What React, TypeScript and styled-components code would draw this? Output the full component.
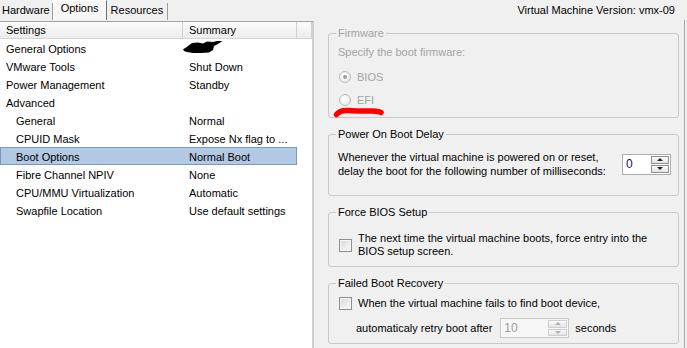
import React from "react";
import styled, { createGlobalStyle, css } from "styled-components";

const GlobalStyle = createGlobalStyle`
  html, body { margin: 0; padding: 0; background: #f0f0f0; }
  body {
    font-family: "Liberation Sans", Arial, sans-serif;
    font-size: 11px;
    color: #000;
  }
`;

const Window = styled.div`
  width: 687px;
  height: 348px;
  overflow: hidden;
  display: flex;
  flex-direction: column;
  background: #f0f0f0;
`;

const TopBar = styled.div`
  height: 20px;
  display: flex;
  justify-content: space-between;
  align-items: flex-end;
  flex-shrink: 0;
`;

const TabStrip = styled.div`
  display: flex;
  align-items: flex-end;
  height: 20px;
`;

const Tab = styled.div<{ $active?: boolean; $pad: number }>`
  box-sizing: border-box;
  height: 17px;
  line-height: 15px;
  padding: 0 ${(p) => p.$pad}px;
  border-right: 1px solid #9a9a9a;
  white-space: nowrap;
  ${(p) =>
    p.$active &&
    css`
      height: 20px;
      line-height: 15px;
      background: #f7f7f7;
      border-left: 1px solid #ffffff;
      border-top: 1px solid #ffffff;
      border-right: 1px solid #6e6e6e;
    `}
`;

const VersionLabel = styled.div`
  line-height: 20px;
  padding-right: 12px;
  white-space: nowrap;
`;

const Body = styled.div`
  flex: 1;
  display: flex;
  min-height: 0;
`;

const ListPanel = styled.div`
  box-sizing: border-box;
  width: 314px;
  margin-top: 1px;
  background: #fff;
  border-top: 1px solid #a0a0a0;
  border-right: 2px solid #cfcfcf;
  flex-shrink: 0;
`;

const HeaderRow = styled.div`
  display: flex;
  height: 16px;
  border-bottom: 1px solid #d5d5d5;
  background: linear-gradient(#fbfbfb, #ececec);
`;

const HeaderCell = styled.div<{ $w?: number }>`
  box-sizing: border-box;
  ${(p) => (p.$w ? `width: ${p.$w}px;` : "flex: 1;")}
  padding-left: 6px;
  line-height: 16px;
  border-right: 1px solid #d0d0d0;
  white-space: nowrap;
`;

const Row = styled.div<{ $selected?: boolean }>`
  box-sizing: border-box;
  display: grid;
  grid-template-columns: 183px 114px;
  width: 297px;
  height: 18px;
  line-height: 18px;
  border: 1px solid transparent;
  ${(p) =>
    p.$selected &&
    css`
      background: #b3c8e2;
      border-color: #7898c4;
    `}
`;

const NameCell = styled.div<{ $indent: number }>`
  padding-left: ${(p) => p.$indent - 1}px;
  white-space: nowrap;
  overflow: hidden;
`;

const SummaryCell = styled.div`
  padding-left: 5px;
  white-space: nowrap;
  display: flex;
  align-items: center;
`;

const InkBlot = styled.svg`
  margin-left: -6px;
  margin-top: -3px;
  flex-shrink: 0;
`;

const DetailPanel = styled.div`
  flex: 1;
  box-sizing: border-box;
  padding: 6px 5px 0 14px;
  border-right: 1px solid #a7a7a7;
  margin-right: 2px;
`;

const GroupBox = styled.fieldset<{ $pr?: number }>`
  margin: 0 0 9px 0;
  padding: 0 ${(p) => p.$pr ?? 9}px 0 9px;
  border: 1px solid #c9c9c9;
  border-radius: 3px;
  min-width: 0;
`;

const GroupTitle = styled.legend<{ $disabled?: boolean }>`
  padding: 0 2px;
  margin-left: -2px;
  line-height: 14px;
  color: ${(p) => (p.$disabled ? "#a3a3a3" : "#000")};
`;

const GroupBody = styled.div<{ $pt: number; $pb: number }>`
  padding-top: ${(p) => p.$pt}px;
  padding-bottom: ${(p) => p.$pb}px;
  display: flex;
  flex-direction: column;
`;

const DisabledText = styled.div<{ $mb?: number }>`
  color: #a3a3a3;
  line-height: 14px;
  height: 14px;
  margin-bottom: ${(p) => p.$mb ?? 0}px;
`;

const RadioRow = styled.div<{ $mb?: number }>`
  position: relative;
  display: flex;
  align-items: center;
  height: 14px;
  line-height: 14px;
  gap: 6px;
  padding-left: 1px;
  color: #a3a3a3;
  margin-bottom: ${(p) => p.$mb ?? 0}px;
`;

const RadioCircle = styled.span<{ $checked?: boolean }>`
  box-sizing: border-box;
  width: 12px;
  height: 12px;
  border-radius: 50%;
  border: 1px solid #b8b8b8;
  background: radial-gradient(circle at 40% 40%, #ffffff, #e6e6e6);
  display: flex;
  align-items: center;
  justify-content: center;
  &::after {
    content: "";
    width: 4px;
    height: 4px;
    border-radius: 50%;
    background: ${(p) => (p.$checked ? "#9c9c9c" : "transparent")};
  }
`;

const RedMark = styled.svg`
  position: absolute;
  left: -5px;
  top: 12px;
`;

const DelayRow = styled.div`
  display: flex;
  align-items: center;
  justify-content: space-between;
  height: 28px;
`;

const Para = styled.div<{ $lh?: number }>`
  line-height: ${(p) => p.$lh ?? 14}px;
  white-space: nowrap;
`;

const SpinBox = styled.div<{ $w: number; $h: number; $disabled?: boolean }>`
  box-sizing: border-box;
  width: ${(p) => p.$w}px;
  height: ${(p) => p.$h}px;
  border: 1px solid ${(p) => (p.$disabled ? "#c9c9c9" : "#abadb3")};
  background: ${(p) => (p.$disabled ? "#f7f7f7" : "#fff")};
  display: flex;
  align-items: stretch;
  flex-shrink: 0;
`;

const SpinValue = styled.div<{ $disabled?: boolean }>`
  flex: 1;
  padding-left: 3px;
  display: flex;
  align-items: center;
  font-size: 12px;
  color: ${(p) => (p.$disabled ? "#9a9a9a" : "#1a1060")};
`;

const SpinButtons = styled.div<{ $w: number }>`
  width: ${(p) => p.$w}px;
  display: flex;
  flex-direction: column;
  padding: 1px;
  gap: 1px;
`;

const SpinButton = styled.div<{ $disabled?: boolean }>`
  flex: 1;
  box-sizing: border-box;
  border: 1px solid ${(p) => (p.$disabled ? "#cfcfcf" : "#8e8f8f")};
  background: linear-gradient(#fafafa, #e4e4e4);
  display: flex;
  align-items: center;
  justify-content: center;
`;

const Arrow = styled.span<{ $down?: boolean; $disabled?: boolean }>`
  width: 0;
  height: 0;
  border-left: 3px solid transparent;
  border-right: 3px solid transparent;
  ${(p) =>
    p.$down
      ? `border-top: 3px solid ${p.$disabled ? "#b0b0b0" : "#202020"};`
      : `border-bottom: 3px solid ${p.$disabled ? "#b0b0b0" : "#202020"};`}
`;

const CheckRow = styled.div<{ $gap: number }>`
  display: flex;
  align-items: center;
  gap: ${(p) => p.$gap}px;
  padding-left: 1px;
`;

const CheckBox = styled.span`
  box-sizing: border-box;
  width: 13px;
  height: 13px;
  border: 1px solid #8e8f8f;
  background: linear-gradient(135deg, #dadada, #fbfbfb);
  box-shadow: inset 0 0 0 1px #f4f4f4;
  flex-shrink: 0;
`;

const RetryRow = styled.div`
  display: flex;
  align-items: center;
  height: 20px;
  margin-top: 8px;
  padding-left: 18px;
  white-space: nowrap;
`;

const RetryLabel = styled.span<{ $ml?: number; $mr?: number }>`
  margin-left: ${(p) => p.$ml ?? 0}px;
  margin-right: ${(p) => p.$mr ?? 0}px;
`;

type Item = { name: string; summary?: string; indent: number; blot?: boolean; selected?: boolean };

const items: Item[] = [
  { name: "General Options", indent: 6, blot: true },
  { name: "VMware Tools", summary: "Shut Down", indent: 6 },
  { name: "Power Management", summary: "Standby", indent: 6 },
  { name: "Advanced", summary: "", indent: 6 },
  { name: "General", summary: "Normal", indent: 16 },
  { name: "CPUID Mask", summary: "Expose Nx flag to ...", indent: 16 },
  { name: "Boot Options", summary: "Normal Boot", indent: 16, selected: true },
  { name: "Fibre Channel NPIV", summary: "None", indent: 16 },
  { name: "CPU/MMU Virtualization", summary: "Automatic", indent: 16 },
  { name: "Swapfile Location", summary: "Use default settings", indent: 16 },
];

function Spinner({ w, h, bw, value, disabled }: { w: number; h: number; bw: number; value: string; disabled?: boolean }) {
  return (
    <SpinBox $w={w} $h={h} $disabled={disabled}>
      <SpinValue $disabled={disabled}>{value}</SpinValue>
      <SpinButtons $w={bw}>
        <SpinButton $disabled={disabled}>
          <Arrow $disabled={disabled} />
        </SpinButton>
        <SpinButton $disabled={disabled}>
          <Arrow $down $disabled={disabled} />
        </SpinButton>
      </SpinButtons>
    </SpinBox>
  );
}

export default function App() {
  return (
    <>
      <GlobalStyle />
      <Window>
        <TopBar>
          <TabStrip>
            <Tab $pad={2}>Hardware</Tab>
            <Tab $pad={7} $active>
              Options
            </Tab>
            <Tab $pad={4}>Resources</Tab>
          </TabStrip>
          <VersionLabel>Virtual Machine Version: vmx-09</VersionLabel>
        </TopBar>
        <Body>
          <ListPanel>
            <HeaderRow>
              <HeaderCell $w={183}>Settings</HeaderCell>
              <HeaderCell $w={114}>Summary</HeaderCell>
              <HeaderCell />
            </HeaderRow>
            {items.map((it) => (
              <Row key={it.name} $selected={it.selected}>
                <NameCell $indent={it.indent}>{it.name}</NameCell>
                <SummaryCell>
                  {it.blot ? (
                    <InkBlot width="40" height="12" viewBox="0 0 40 12">
                      <path
                        d="M0 8.5 L5 5 L9 2 L15 1.5 L20 2.5 L24 0.5 L30 1 L34 0 L39.5 0 L35 3 L31 5 L30 9 L26 11.5 L18 12 L10 12 L4 11 L1 10 Z"
                        fill="#000"
                      />
                    </InkBlot>
                  ) : (
                    it.summary
                  )}
                </SummaryCell>
              </Row>
            ))}
          </ListPanel>
          <DetailPanel>
            <GroupBox>
              <GroupTitle $disabled>Firmware</GroupTitle>
              <GroupBody $pt={5} $pb={10}>
                <DisabledText $mb={11}>Specify the boot firmware:</DisabledText>
                <RadioRow $mb={9}>
                  <RadioCircle $checked />
                  BIOS
                </RadioRow>
                <RadioRow>
                  <RadioCircle />
                  EFI
                  <RedMark width="52" height="14" viewBox="0 0 52 14">
                    <path
                      d="M3.5 9.5 C6 6, 10 5, 16 5.5 C24 6.3, 34 5.7, 40 6 C44 6.3, 46.5 6.5, 48 7.5"
                      stroke="#ff0000"
                      strokeWidth="5.5"
                      strokeLinecap="round"
                      fill="none"
                    />
                  </RedMark>
                </RadioRow>
              </GroupBody>
            </GroupBox>

            <GroupBox $pr={7}>
              <GroupTitle>Power On Boot Delay</GroupTitle>
              <GroupBody $pt={9} $pb={17}>
                <DelayRow>
                  <Para>
                    Whenever the virtual machine is powered on or reset,
                    <br />
                    delay the boot for the following number of milliseconds:
                  </Para>
                  <Spinner w={49} h={21} bw={18} value="0" />
                </DelayRow>
              </GroupBody>
            </GroupBox>

            <GroupBox>
              <GroupTitle>Force BIOS Setup</GroupTitle>
              <GroupBody $pt={13} $pb={8}>
                <CheckRow $gap={6}>
                  <CheckBox />
                  <Para $lh={13}>
                    The next time the virtual machine boots, force entry into the
                    <br />
                    BIOS setup screen.
                  </Para>
                </CheckRow>
              </GroupBody>
            </GroupBox>

            <GroupBox>
              <GroupTitle>Failed Boot Recovery</GroupTitle>
              <GroupBody $pt={6} $pb={5}>
                <CheckRow $gap={6}>
                  <CheckBox />
                  <Para>When the virtual machine fails to find boot device,</Para>
                </CheckRow>
                <RetryRow>
                  <RetryLabel $mr={8}>automaticaly retry boot after</RetryLabel>
                  <Spinner w={69} h={20} bw={19} value="10" disabled />
                  <RetryLabel $ml={6}>seconds</RetryLabel>
                </RetryRow>
              </GroupBody>
            </GroupBox>
          </DetailPanel>
        </Body>
      </Window>
    </>
  );
}
